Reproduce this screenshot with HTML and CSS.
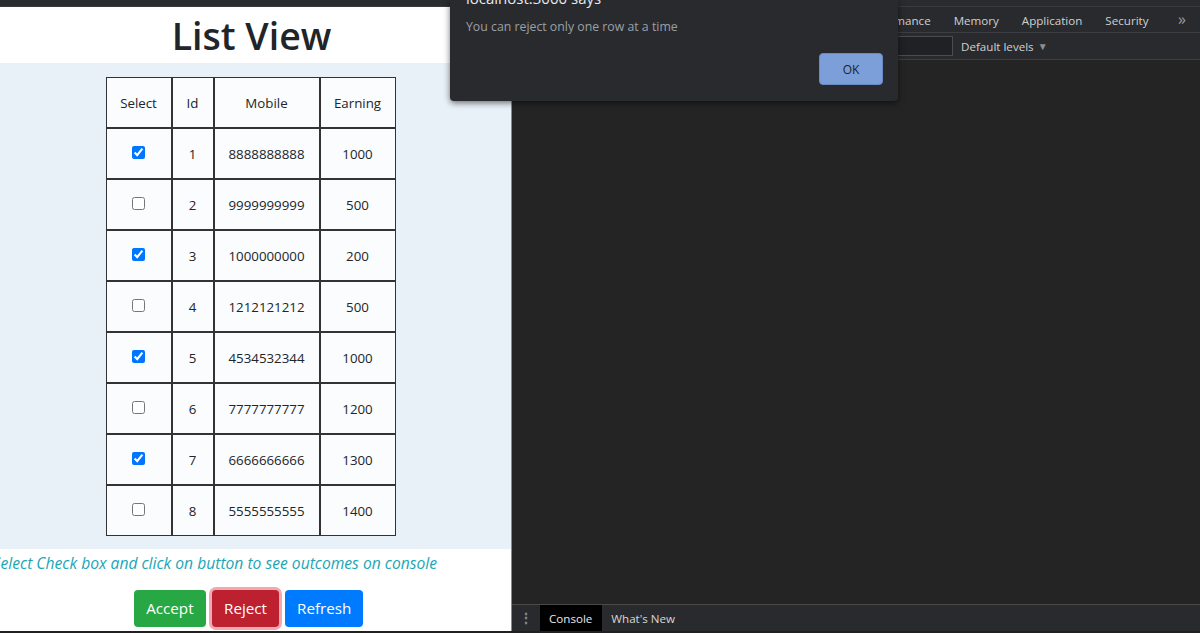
FILE: index.html
```html
<!DOCTYPE html>
<html>
<head>
<meta charset="utf-8">
<title>List View</title>
<link rel="stylesheet" href="styles.css">
</head>
<body>
<div class="topstrip"></div>
<div class="main">
  <div class="page">
    <header class="page-head"><h1 class="title">List View</h1></header>
    <section class="list">
      <table class="grid">
        <colgroup><col class="c-sel"><col class="c-id"><col class="c-mob"><col class="c-ear"></colgroup>
        <thead>
          <tr><th>Select</th><th>Id</th><th>Mobile</th><th>Earning</th></tr>
        </thead>
        <tbody>
          <tr><td><input type="checkbox" checked></td><td>1</td><td>8888888888</td><td>1000</td></tr>
          <tr><td><input type="checkbox"></td><td>2</td><td>9999999999</td><td>500</td></tr>
          <tr><td><input type="checkbox" checked></td><td>3</td><td>1000000000</td><td>200</td></tr>
          <tr><td><input type="checkbox"></td><td>4</td><td>1212121212</td><td>500</td></tr>
          <tr><td><input type="checkbox" checked></td><td>5</td><td>4534532344</td><td>1000</td></tr>
          <tr><td><input type="checkbox"></td><td>6</td><td>7777777777</td><td>1200</td></tr>
          <tr><td><input type="checkbox" checked></td><td>7</td><td>6666666666</td><td>1300</td></tr>
          <tr><td><input type="checkbox"></td><td>8</td><td>5555555555</td><td>1400</td></tr>
        </tbody>
      </table>
    </section>
    <div class="hint-row"><p class="hint">Select Check box and click on button to see outcomes on console</p></div>
    <div class="actions">
      <button class="btn btn-accept">Accept</button>
      <button class="btn btn-reject">Reject</button>
      <button class="btn btn-refresh">Refresh</button>
    </div>
  </div>
  <div class="devtools">
    <div class="dt-tabs">
      <div class="dt-tablist">
        <span class="dt-tab">Performance</span>
        <span class="dt-tab">Memory</span>
        <span class="dt-tab">Application</span>
        <span class="dt-tab">Security</span>
      </div>
      <span class="dt-more">»</span>
    </div>
    <div class="dt-toolbar">
      <div class="dt-filter-wrap"><div class="dt-filter"></div></div>
      <div class="dt-levels">Default levels <span class="dt-caret">▼</span></div>
    </div>
    <div class="dt-console"></div>
    <div class="dt-drawer">
      <span class="dt-dots">⋮</span>
      <span class="dt-dtab dt-dtab-active">Console</span>
      <span class="dt-dtab">What's New</span>
    </div>
  </div>
</div>
<div class="bottomstrip"></div>

<div class="dialog">
  <div class="dlg-title">localhost:3000 says</div>
  <div class="dlg-msg">You can reject only one row at a time</div>
  <div class="dlg-actions"><button class="dlg-ok">OK</button></div>
</div>
</body>
</html>
```

FILE: styles.css
```css
* { box-sizing: border-box; }
html, body { margin: 0; padding: 0; }
body {
  width: 1200px;
  height: 633px;
  overflow: hidden;
  background: #242424;
  font-family: "Segoe UI", "Open Sans", "Noto Sans", sans-serif;
  position: relative;
}
.topstrip { height: 7px; background: #2a2b2e; border-bottom: 1px solid #3a3b3e; }
.bottomstrip { height: 2px; background: #202020; }
.main { display: flex; height: 624px; }

/* page */
.page {
  width: 512px;
  flex-shrink: 0;
  background: #fff;
  border-right: 1px solid #8a8a8a;
  display: flex;
  flex-direction: column;
  overflow: hidden;
}
.page-head { height: 56px; display: flex; justify-content: center; align-items: center; }
.title {
  margin: 0 0 0 -8px;
  font-size: 37.5px;
  font-weight: 600;
  color: #212529;
  line-height: 1;
  padding-top: 1px;
}
.list {
  background: #e9f1f8;
  height: 486px;
  padding-top: 14px;
  display: flex;
  justify-content: center;
  align-items: flex-start;
}
.grid {
  border-collapse: separate;
  border-spacing: 0;
  table-layout: fixed;
  width: 290px;
  background: #fafcfe;
  color: #212529;
  font-size: 13.3px;
  margin-left: -10px;
}
.grid th, .grid td {
  border: 1px solid #333;
  height: 51px;
  padding: 0;
  text-align: center;
  vertical-align: middle;
  font-weight: 400;
}
.c-sel { width: 66px; }
.c-id { width: 42px; }
.c-mob { width: 106px; }
.c-ear { width: 76px; }
.grid input { margin: 0; width: 13px; height: 13px; vertical-align: middle; position: relative; top: -2px; }

.hint-row { display: flex; justify-content: flex-end; padding-right: 74px; height: 28px; align-items: center; }
.hint {
  margin: 0;
  flex-shrink: 0;
  white-space: nowrap;
  font-style: italic;
  font-size: 15.65px;
  color: #1aa6b6;
}
.actions { display: flex; justify-content: center; gap: 6px; padding-top: 13px; margin-left: -14px; }
.btn {
  border: none;
  border-radius: 4px;
  color: #fff;
  font-family: inherit;
  font-size: 15.2px;
  height: 37px;
  padding: 0 12px;
  line-height: 37px;
}
.btn-accept { background: #28a745; padding: 0 12.5px; }
.btn-reject { background: #bd2130; box-shadow: 0 0 0 3px rgba(225, 83, 97, 0.5); }
.btn-refresh { background: #007bff; }

/* devtools */
.devtools { flex: 1; display: flex; flex-direction: column; background: #242424; color: #cfcfcf; font-size: 11.6px; }
.dt-tabs { height: 26px; background: #292a2d; display: flex; border-bottom: 1px solid #3d3e41; }
.dt-tablist { flex: 1; display: flex; justify-content: flex-end; overflow: hidden; }
.dt-tab { flex-shrink: 0; padding: 1px 11.5px 0; line-height: 25px; color: #d0d0d0; }
.dt-more { width: 40px; text-align: center; line-height: 24px; font-size: 16px; color: #9a9a9a; padding-left: 4px; }
.dt-toolbar { height: 27px; background: #292a2d; display: flex; align-items: center; border-bottom: 1px solid #3d3e41; }
.dt-filter-wrap { flex: 1; display: flex; justify-content: flex-end; }
.dt-filter { width: 160px; height: 20px; border: 1px solid #4b4c4f; background: #202124; }
.dt-levels { width: 247px; padding-left: 8px; color: #d0d0d0; }
.dt-caret { font-size: 10px; color: #8e8e8e; margin-left: 1px; position: relative; top: -1px; }
.dt-console { flex: 1; background: #242424; border-bottom: 1px solid #4a4a4a; }
.dt-drawer { height: 26px; background: #292a2d; display: flex; align-items: stretch; }
.dt-dots { width: 28px; text-align: center; line-height: 26px; color: #8a8a8a; font-size: 14px; font-weight: bold; }
.dt-dtab { padding: 0 10px 0 9px; line-height: 27px; color: #d6d6d6; }
.dt-dtab-active { background: #000; color: #e8e8e8; }

/* dialog */
.dialog {
  position: absolute;
  left: 450px;
  top: 0;
  width: 448px;
  height: 101px;
  background: #292a2d;
  border-radius: 0 0 4px 4px;
  box-shadow: 0 2px 6px rgba(0,0,0,0.55);
  padding: 0 16px;
  font-size: 12.3px;
}
.dlg-title { color: #e8eaed; font-size: 15px; line-height: 16px; margin-top: -10px; }
.dlg-msg { color: #9aa0a6; margin-top: 12px; line-height: 18px; }
.dlg-actions { display: flex; justify-content: flex-end; margin-top: 17px; }
.dlg-ok {
  width: 64px;
  height: 32px;
  border: 1px solid #6a8ac4;
  border-radius: 4px;
  background: #7c9fd9;
  color: #202124;
  font-family: inherit;
  font-size: 12px;
  margin-right: -1px;
}
```
